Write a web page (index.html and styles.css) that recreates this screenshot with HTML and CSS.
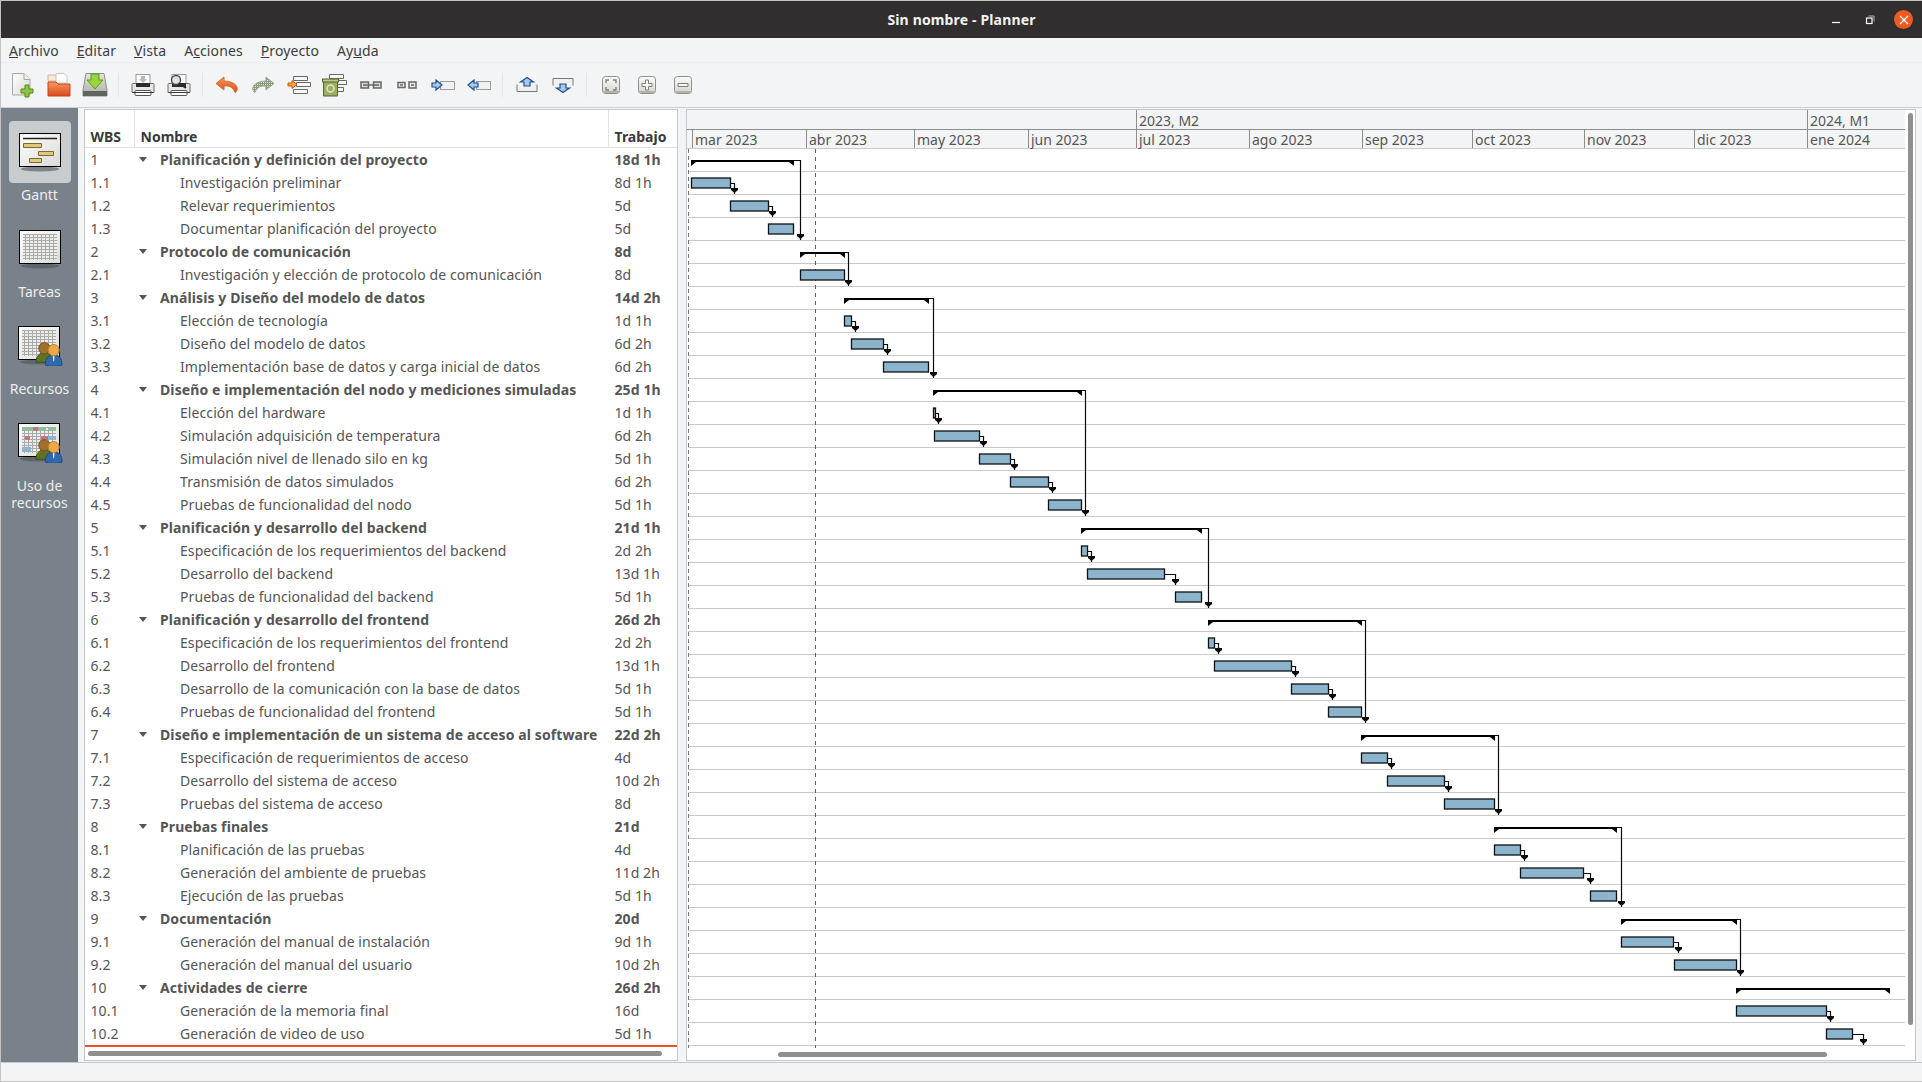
FILE: index.html
```html
<!DOCTYPE html>
<html lang="es">
<head>
  <meta charset="UTF-8">
  <title>Sin nombre - Planner</title>
  <link rel="stylesheet" href="styles.css">
</head>
<body>
<svg class="defs" width="0" height="0">
  <defs>
    <linearGradient id="pageFill" x1="0" y1="0" x2="1" y2="1"><stop offset="0" stop-color="#ffffff"/><stop offset="1" stop-color="#d9d9d6"/></linearGradient>
    <linearGradient id="orangeFill" x1="0" y1="0" x2="0" y2="1"><stop offset="0" stop-color="#f59a5d"/><stop offset="1" stop-color="#d9491c"/></linearGradient>
    <linearGradient id="diskFill" x1="0" y1="0" x2="0" y2="1"><stop offset="0" stop-color="#e4e6e0"/><stop offset="1" stop-color="#a9ada6"/></linearGradient>
    <linearGradient id="keyFill" x1="0" y1="0" x2="0" y2="1"><stop offset="0" stop-color="#fbfbfa"/><stop offset="1" stop-color="#d3d3cf"/></linearGradient>
    <pattern id="cells" width="4" height="3" patternUnits="userSpaceOnUse"><rect width="4" height="3" fill="#ececeb"/><path d="M3.500 0V3M0 2.500H4" stroke="#aaa" stroke-width="1"/></pattern>
    <pattern id="hatch" width="2" height="2" patternUnits="userSpaceOnUse"><rect width="2" height="2" fill="#8a9a78"/><rect width="1" height="1" fill="#e3e8dc"/></pattern>
    <pattern id="rowLine" x="0" y="149" width="1218" height="23" patternUnits="userSpaceOnUse"><rect y="22" width="1218" height="1" fill="#c9c9c9"/></pattern>
    <marker id="arrow" viewBox="-4 -7 8 8" refX="0" refY="0" markerWidth="8" markerHeight="8" markerUnits="userSpaceOnUse" orient="0"><path d="M-3.500 -6H3.500V-4L0 -1L-3.500 -4Z" fill="#0a0a0a"/></marker>

    <symbol id="frame" viewBox="0 0 44 40"><ellipse cx="22" cy="37" rx="19" ry="2.500" fill="#4d5358" opacity=".6"/><rect x="1.500" y="1.500" width="41" height="33" fill="url(#pageFill)" stroke="#000"/></symbol>
    <symbol id="people" viewBox="0 0 30 30">
      <path d="M1 26c0-7 4-10 9-10s9 3 9 10z" fill="#5f7320" stroke="#3f4d14"/>
      <circle cx="10" cy="11" r="6" fill="#a0702c" stroke="#6f4c1c"/>
      <path d="M11 29c0-8 4-11 9-11s9 3 9 11c-5 2-13 2-18 0z" fill="#2f68ad" stroke="#1d4679"/>
      <path d="M19 18h2l-.5 7h-1z" fill="#e8eef5"/>
      <circle cx="20" cy="13" r="6" fill="#eba94a" stroke="#b67a22"/>
    </symbol>
    <symbol id="keyBase" viewBox="0 0 20 20"><rect x="1.500" y="1.500" width="17" height="17" rx="3" fill="url(#keyFill)" stroke="#8f8f8b"/><rect x="2" y="16" width="16" height="2" rx="1" fill="#b3b3ae"/></symbol>
    <symbol id="printer" viewBox="0 0 24 24">
      <rect x="5" y="1.500" width="14" height="11" fill="#fff" stroke="#9a9a9a"/>
      <path d="M2 10.500h20a1 1 0 0 1 1 1v8H1v-8a1 1 0 0 1 1-1z" fill="#e6e7e4" stroke="#6d6d6d"/>
      <rect x="5" y="10" width="14" height="4" fill="#2c2c2c"/>
      <rect x="4" y="17.500" width="16" height="5" rx="1" fill="#fafafa" stroke="#565656"/>
      <rect x="1.500" y="19" width="21" height="1" fill="#3a3a3a"/>
    </symbol>
  </defs>
</svg>

<div class="window">
  <header class="titlebar">
    <span></span>
    <span class="title">Sin nombre - Planner</span>
    <div class="winbtns">
      <svg class="winbtn" width="10" height="10" viewBox="0 0 10 10"><path d="M1 7.500H9" stroke="#fff" stroke-width="1.200"/></svg>
      <svg class="winbtn" width="10" height="10" viewBox="0 0 10 10"><rect x="1.500" y="3" width="5.500" height="5.500" fill="none" stroke="#fff" stroke-width="1.200"/><path d="M3.500 1H9V6.500" fill="none" stroke="#b5b5b5"/></svg>
      <span class="closebtn"><svg width="10" height="10" viewBox="0 0 10 10"><path d="M1 1L9 9M9 1L1 9" stroke="#fff" stroke-width="1.300"/></svg></span>
    </div>
  </header>

  <nav class="menubar">
    <span class="menu"><u>A</u>rchivo</span>
    <span class="menu"><u>E</u>ditar</span>
    <span class="menu"><u>V</u>ista</span>
    <span class="menu">A<u>c</u>ciones</span>
    <span class="menu"><u>P</u>royecto</span>
    <span class="menu">Ay<u>u</u>da</span>
  </nav>

  <div class="toolbar">
    <span class="tool"><svg width="24" height="26" viewBox="0 0 24 26"><path d="M1.500 1.500H13L19 7.500V23H1.500Z" fill="url(#pageFill)" stroke="#a9a9a6"/><path d="M13 1.500V7.500H19" fill="#efefec" stroke="#a9a9a6"/><path d="M14 13h4v4h4v4h-4v4h-4v-4h-4v-4h4z" fill="#8cc63f" stroke="#5a8a1d"/></svg></span>
    <span class="tool"><svg width="26" height="26" viewBox="0 0 26 26"><path d="M2 3H9L11 5V9H2Z" fill="#f7e8d8" stroke="#d3b795"/><path d="M10 1.500H18L21 4.500V11H10Z" fill="#fff" stroke="#c4c4c0"/><path d="M2 10H10L12 12H24V24H2Z" fill="url(#orangeFill)" stroke="#c8441c"/></svg></span>
    <span class="tool"><svg width="26" height="26" viewBox="0 0 26 26"><path d="M4 1.500H22L25 18V24H1V18Z" fill="url(#diskFill)" stroke="#8d918a"/><rect x="1" y="19" width="24" height="5" fill="#60645f"/><path d="M9 2H17V8H21L13 17L5 8H9Z" fill="#9bd43d" stroke="#5f9a1d"/></svg></span>
    <span class="sep"></span>
    <span class="tool"><svg width="24" height="24"><use href="#printer"/><path d="M10 3h4v3h2l-4 4-4-4h2z" fill="#b9b9b9"/></svg></span>
    <span class="tool"><svg width="24" height="24"><use href="#printer"/><circle cx="9" cy="7" r="4.500" fill="#dfe3e6" stroke="#4c4c4c" stroke-width="1.400"/><path d="M12 10.500L19 15" stroke="#2b2b2b" stroke-width="2"/></svg></span>
    <span class="sep"></span>
    <span class="tool"><svg width="24" height="18" viewBox="0 0 24 18"><path d="M9 1L1 7.500L9 14V10C14 9.500 18 11 20 16.500C24 15 24 5.500 9 5Z" fill="url(#orangeFill)" stroke="#dc6b2c"/></svg></span>
    <span class="tool"><svg width="24" height="18" viewBox="0 0 24 18"><path d="M15 1L23 7.500L15 14V10C10 9.500 6 11 4 16.500C0 15 0 5.500 15 5Z" fill="url(#hatch)" stroke="#9aa78a"/></svg></span>
    <span class="tool"><svg width="24" height="20" viewBox="0 0 24 20"><path d="M6.500 1.500H20.500V5.500H6.500ZM9.500 7.500H23.500V11.500H9.500ZM6.500 14.500H20.500V18.500H6.500Z" fill="#f7f7f7" stroke="#6a6a6a"/><path d="M1 8H5V5.500L10 9.500L5 13.500V11H1Z" fill="#f7a934" stroke="#c9541c"/></svg></span>
    <span class="tool"><svg width="26" height="24" viewBox="0 0 26 24"><path d="M7.500 1.500H21.500V5.500H7.500ZM10.500 7.500H24.500V11.500H10.500ZM7.500 14.500H21.500V18.500H7.500Z" fill="#f7f7f7" stroke="#6a6a6a"/><path d="M1.500 8H15.500V23H1.500Z" fill="#9cae62" stroke="#55642a"/><rect x=".5" y="6" width="16" height="3" fill="#bfc98e" stroke="#55642a"/><circle cx="8.500" cy="15.500" r="3.500" fill="none" stroke="#dfe6c4" stroke-width="1.500"/></svg></span>
    <span class="tool"><svg width="22" height="10" viewBox="0 0 22 10"><path d="M1 2H8.500V8H1ZM13.500 2H21V8H13.500ZM3 5H19" fill="#d9d9d9" stroke="#666" stroke-width="1.500"/></svg></span>
    <span class="tool"><svg width="20" height="10" viewBox="0 0 20 10"><path d="M1 2.500H8V7.500H1ZM12 2H19V8H12ZM14 5H17M6 5H3" fill="#e9e9e9" stroke="#666" stroke-width="1.500"/></svg></span>
    <span class="tool"><svg width="24" height="12" viewBox="0 0 24 12"><rect x="9.500" y="2.500" width="14" height="8" fill="#f1f1f0" stroke="#9c9c9c"/><path d="M1 4H5V1L11 6L5 11V8H1Z" fill="#a9c8ea" stroke="#1f4f8f" stroke-width="1.200"/></svg></span>
    <span class="tool"><svg width="24" height="12" viewBox="0 0 24 12"><rect x="9.500" y="2.500" width="14" height="8" fill="#f1f1f0" stroke="#9c9c9c"/><path d="M11 4H7V1L1 6L7 11V8H11Z" fill="#a9c8ea" stroke="#1f4f8f" stroke-width="1.200"/></svg></span>
    <span class="sep"></span>
    <span class="tool"><svg width="22" height="16" viewBox="0 0 22 16"><path d="M1 7.500V14.500H21V7.500" fill="#f1f1f0" stroke="#777"/><path d="M8 9V5H4.500L11 .5L17.500 5H14V9Z" fill="#a9c8ea" stroke="#1f4f8f" stroke-width="1.200"/></svg></span>
    <span class="tool"><svg width="22" height="16" viewBox="0 0 22 16"><path d="M1 8.500V1.500H21V8.500" fill="#f1f1f0" stroke="#777"/><path d="M8 7V11H4.500L11 15.500L17.500 11H14V7Z" fill="#a9c8ea" stroke="#1f4f8f" stroke-width="1.200"/></svg></span>
    <span class="sep"></span>
    <span class="tool"><svg width="20" height="20"><use href="#keyBase"/><path d="M5 8V5H8M12 5H15V8M15 12V15H12M8 15H5V12" fill="none" stroke="#7d7d7a" stroke-width="1.300"/></svg></span>
    <span class="tool"><svg width="20" height="20"><use href="#keyBase"/><path d="M8.500 5H11.500V8.500H15V11.500H11.500V15H8.500V11.500H5V8.500H8.500Z" fill="#f5f5f3" stroke="#7d7d7a"/></svg></span>
    <span class="tool"><svg width="20" height="20"><use href="#keyBase"/><path d="M5 8.500H15V11.500H5Z" fill="#f5f5f3" stroke="#7d7d7a"/></svg></span>
  </div>

  <div class="main">
    <aside class="sidebar">
      <div class="view active">
        <div class="view-icon"><svg width="44" height="40">
          <use href="#frame"/>
          <path d="M5 6.500H39" stroke="#222" stroke-width="1.300"/>
          <path d="M5.500 11.500H23.500V15.500H5.500ZM20.500 19.500H35.500V23.500H20.500ZM11.500 26.500H23.500V30.500H11.500Z" fill="#e0c97c" stroke="#7a6a35"/>
        </svg></div>
        <span class="view-label">Gantt</span>
      </div>
      <div class="view">
        <div class="view-icon"><svg width="44" height="40">
          <use href="#frame"/>
          <rect x="5" y="5" width="34" height="26" fill="url(#cells)"/>
        </svg></div>
        <span class="view-label">Tareas</span>
      </div>
      <div class="view">
        <div class="view-icon"><svg width="46" height="42">
          <use href="#frame" width="44" height="40"/>
          <rect x="5" y="5" width="34" height="26" fill="url(#cells)"/>
          <use href="#people" x="18" y="13" width="28" height="28"/>
        </svg></div>
        <span class="view-label">Recursos</span>
      </div>
      <div class="view">
        <div class="view-icon"><svg width="46" height="42">
          <use href="#frame" width="44" height="40"/>
          <rect x="5" y="5" width="34" height="26" fill="url(#cells)"/>
          <path d="M5 5H16V9H5ZM21 5H29V9H21ZM32 5H39V9H32Z" fill="#8fc09b"/>
          <path d="M16 5H21V9H16ZM8 14H13V18H8ZM24 14H31V18H24Z" fill="#c9727f"/>
          <path d="M5 25H14V29H5ZM31 14H39V18H31Z" fill="#8eb4d3"/>
          <use href="#people" x="18" y="13" width="28" height="28"/>
        </svg></div>
        <span class="view-label">Uso de recursos</span>
      </div>
    </aside>

    <section class="tasks">
      <div class="grid head">
        <span class="cell">WBS</span>
        <span class="cell">Nombre</span>
        <span class="cell">Trabajo</span>
      </div>
      <div class="grid row group"><span>1</span><span class="name"><i class="exp"></i>Planificación y definición del proyecto</span><span>18d 1h</span></div>
      <div class="grid row"><span>1.1</span><span class="name">Investigación preliminar</span><span>8d 1h</span></div>
      <div class="grid row"><span>1.2</span><span class="name">Relevar requerimientos</span><span>5d</span></div>
      <div class="grid row"><span>1.3</span><span class="name">Documentar planificación del proyecto</span><span>5d</span></div>
      <div class="grid row group"><span>2</span><span class="name"><i class="exp"></i>Protocolo de comunicación</span><span>8d</span></div>
      <div class="grid row"><span>2.1</span><span class="name">Investigación y elección de protocolo de comunicación</span><span>8d</span></div>
      <div class="grid row group"><span>3</span><span class="name"><i class="exp"></i>Análisis y Diseño del modelo de datos</span><span>14d 2h</span></div>
      <div class="grid row"><span>3.1</span><span class="name">Elección de tecnología</span><span>1d 1h</span></div>
      <div class="grid row"><span>3.2</span><span class="name">Diseño del modelo de datos</span><span>6d 2h</span></div>
      <div class="grid row"><span>3.3</span><span class="name">Implementación base de datos y carga inicial de datos</span><span>6d 2h</span></div>
      <div class="grid row group"><span>4</span><span class="name"><i class="exp"></i>Diseño e implementación del nodo y mediciones simuladas</span><span>25d 1h</span></div>
      <div class="grid row"><span>4.1</span><span class="name">Elección del hardware</span><span>1d 1h</span></div>
      <div class="grid row"><span>4.2</span><span class="name">Simulación adquisición de temperatura</span><span>6d 2h</span></div>
      <div class="grid row"><span>4.3</span><span class="name">Simulación nivel de llenado silo en kg</span><span>5d 1h</span></div>
      <div class="grid row"><span>4.4</span><span class="name">Transmisión de datos simulados</span><span>6d 2h</span></div>
      <div class="grid row"><span>4.5</span><span class="name">Pruebas de funcionalidad del nodo</span><span>5d 1h</span></div>
      <div class="grid row group"><span>5</span><span class="name"><i class="exp"></i>Planificación y desarrollo del backend</span><span>21d 1h</span></div>
      <div class="grid row"><span>5.1</span><span class="name">Especificación de los requerimientos del backend</span><span>2d 2h</span></div>
      <div class="grid row"><span>5.2</span><span class="name">Desarrollo del backend</span><span>13d 1h</span></div>
      <div class="grid row"><span>5.3</span><span class="name">Pruebas de funcionalidad del backend</span><span>5d 1h</span></div>
      <div class="grid row group"><span>6</span><span class="name"><i class="exp"></i>Planificación y desarrollo del frontend</span><span>26d 2h</span></div>
      <div class="grid row"><span>6.1</span><span class="name">Especificación de los requerimientos del frontend</span><span>2d 2h</span></div>
      <div class="grid row"><span>6.2</span><span class="name">Desarrollo del frontend</span><span>13d 1h</span></div>
      <div class="grid row"><span>6.3</span><span class="name">Desarrollo de la comunicación con la base de datos</span><span>5d 1h</span></div>
      <div class="grid row"><span>6.4</span><span class="name">Pruebas de funcionalidad del frontend</span><span>5d 1h</span></div>
      <div class="grid row group"><span>7</span><span class="name"><i class="exp"></i>Diseño e implementación de un sistema de acceso al software</span><span>22d 2h</span></div>
      <div class="grid row"><span>7.1</span><span class="name">Especificación de requerimientos de acceso</span><span>4d</span></div>
      <div class="grid row"><span>7.2</span><span class="name">Desarrollo del sistema de acceso</span><span>10d 2h</span></div>
      <div class="grid row"><span>7.3</span><span class="name">Pruebas del sistema de acceso</span><span>8d</span></div>
      <div class="grid row group"><span>8</span><span class="name"><i class="exp"></i>Pruebas finales</span><span>21d</span></div>
      <div class="grid row"><span>8.1</span><span class="name">Planificación de las pruebas</span><span>4d</span></div>
      <div class="grid row"><span>8.2</span><span class="name">Generación del ambiente de pruebas</span><span>11d 2h</span></div>
      <div class="grid row"><span>8.3</span><span class="name">Ejecución de las pruebas</span><span>5d 1h</span></div>
      <div class="grid row group"><span>9</span><span class="name"><i class="exp"></i>Documentación</span><span>20d</span></div>
      <div class="grid row"><span>9.1</span><span class="name">Generación del manual de instalación</span><span>9d 1h</span></div>
      <div class="grid row"><span>9.2</span><span class="name">Generación del manual del usuario</span><span>10d 2h</span></div>
      <div class="grid row group"><span>10</span><span class="name"><i class="exp"></i>Actividades de cierre</span><span>26d 2h</span></div>
      <div class="grid row"><span>10.1</span><span class="name">Generación de la memoria final</span><span>16d</span></div>
      <div class="grid row"><span>10.2</span><span class="name">Generación de video de uso</span><span>5d 1h</span></div>
      <div class="overshoot"></div>
      <div class="hscroll tasks-scroll"><div class="thumb"></div></div>
    </section>

    <section class="chart">
      <div class="chart-main">
        <div class="tier tier-top">
          <span class="band" style="width:449px"></span>
          <span class="band" style="width:671px">2023, M2</span>
          <span class="band" style="width:98px">2024, M1</span>
        </div>
        <div class="tier tier-months">
          <span class="band band-start" style="width:5px"></span>
          <span class="band" style="width:114px">mar 2023</span>
          <span class="band" style="width:108px">abr 2023</span>
          <span class="band" style="width:114px">may 2023</span>
          <span class="band" style="width:108px">jun 2023</span>
          <span class="band" style="width:113px">jul 2023</span>
          <span class="band" style="width:113px">ago 2023</span>
          <span class="band" style="width:110px">sep 2023</span>
          <span class="band" style="width:112px">oct 2023</span>
          <span class="band" style="width:110px">nov 2023</span>
          <span class="band" style="width:113px">dic 2023</span>
          <span class="band" style="width:98px">ene 2024</span>
        </div>
        <!-- viewBox uses window coordinates, each row is 23px from y=148 -->
        <svg class="gantt" width="1218" height="899" viewBox="687 149 1218 899">
          <rect x="688" y="149" width="1217" height="897" fill="url(#rowLine)"/>
          <path class="guide" d="M688.500 149V1048"/>
          <path class="today" d="M815.500 149V1048"/>

          <!-- summaries -->
          <path class="sum" d="M691 160H794V166L789 162H696L691 166Z"/>
          <path class="sum" d="M800 252H845V258L840 254H805L800 258Z"/>
          <path class="sum" d="M844 298H929V304L924 300H849L844 304Z"/>
          <path class="sum" d="M933 390H1082V396L1077 392H938L933 396Z"/>
          <path class="sum" d="M1081 528H1202V534L1197 530H1086L1081 534Z"/>
          <path class="sum" d="M1208 620H1362V626L1357 622H1213L1208 626Z"/>
          <path class="sum" d="M1361 735H1495V741L1490 737H1366L1361 741Z"/>
          <path class="sum" d="M1494 827H1617V833L1612 829H1499L1494 833Z"/>
          <path class="sum" d="M1621 919H1737V925L1732 921H1626L1621 925Z"/>
          <path class="sum" d="M1736 988H1890V994L1885 990H1741L1736 994Z"/>

          <!-- links -->
          <path class="link" d="M794 160.500H800.500V240"/>
          <path class="link" d="M845 252.500H848.500V286"/>
          <path class="link" d="M929 298.500H933.500V378"/>
          <path class="link" d="M1082 390.500H1085.500V516"/>
          <path class="link" d="M1202 528.500H1208.500V608"/>
          <path class="link" d="M1362 620.500H1365.500V723"/>
          <path class="link" d="M1495 735.500H1498.500V815"/>
          <path class="link" d="M1617 827.500H1621.500V907"/>
          <path class="link" d="M1737 919.500H1740.500V976"/>
          <path class="link" d="M731 183.500H734.500V194"/>
          <path class="link" d="M769 206.500H772.500V217"/>
          <path class="link" d="M852 321.500H855.500V332"/>
          <path class="link" d="M884 344.500H887.500V355"/>
          <path class="link" d="M934 413.500H938.500V424"/>
          <path class="link" d="M980 436.500H983.500V447"/>
          <path class="link" d="M1011 459.500H1014.500V470"/>
          <path class="link" d="M1049 482.500H1052.500V493"/>
          <path class="link" d="M1088 551.500H1091.500V562"/>
          <path class="link" d="M1165 574.500H1175.500V585"/>
          <path class="link" d="M1215 643.500H1218.500V654"/>
          <path class="link" d="M1292 666.500H1295.500V677"/>
          <path class="link" d="M1329 689.500H1332.500V700"/>
          <path class="link" d="M1388 758.500H1391.500V769"/>
          <path class="link" d="M1445 781.500H1448.500V792"/>
          <path class="link" d="M1521 850.500H1524.500V861"/>
          <path class="link" d="M1584 873.500H1590.500V884"/>
          <path class="link" d="M1674 942.500H1678.500V953"/>
          <path class="link" d="M1827 1011.500H1830.500V1022"/>
          <path class="link" d="M1853 1034.500H1863.500V1045"/>

          <!-- tasks -->
          <rect class="bar" x="691.500" y="178" width="39" height="10"/>
          <rect class="bar" x="730.500" y="201" width="38" height="10"/>
          <rect class="bar" x="768.500" y="224" width="25" height="10"/>
          <rect class="bar" x="800.500" y="270" width="44" height="10"/>
          <rect class="bar" x="844.500" y="316" width="7" height="10"/>
          <rect class="bar" x="851.500" y="339" width="32" height="10"/>
          <rect class="bar" x="883.500" y="362" width="45" height="10"/>
          <rect class="bar" x="933.500" y="408" width="2" height="10"/>
          <rect class="bar" x="934.500" y="431" width="45" height="10"/>
          <rect class="bar" x="979.500" y="454" width="31" height="10"/>
          <rect class="bar" x="1010.500" y="477" width="38" height="10"/>
          <rect class="bar" x="1048.500" y="500" width="33" height="10"/>
          <rect class="bar" x="1081.500" y="546" width="6" height="10"/>
          <rect class="bar" x="1087.500" y="569" width="77" height="10"/>
          <rect class="bar" x="1175.500" y="592" width="26" height="10"/>
          <rect class="bar" x="1208.500" y="638" width="6" height="10"/>
          <rect class="bar" x="1214.500" y="661" width="77" height="10"/>
          <rect class="bar" x="1291.500" y="684" width="37" height="10"/>
          <rect class="bar" x="1328.500" y="707" width="33" height="10"/>
          <rect class="bar" x="1361.500" y="753" width="26" height="10"/>
          <rect class="bar" x="1387.500" y="776" width="57" height="10"/>
          <rect class="bar" x="1444.500" y="799" width="50" height="10"/>
          <rect class="bar" x="1494.500" y="845" width="26" height="10"/>
          <rect class="bar" x="1520.500" y="868" width="63" height="10"/>
          <rect class="bar" x="1590.500" y="891" width="26" height="10"/>
          <rect class="bar" x="1621.500" y="937" width="52" height="10"/>
          <rect class="bar" x="1674.500" y="960" width="62" height="10"/>
          <rect class="bar" x="1736.500" y="1006" width="90" height="10"/>
          <rect class="bar" x="1826.500" y="1029" width="26" height="10"/>
        </svg>
        <div class="hscroll chart-scroll"><div class="thumb"></div></div>
      </div>
      <div class="vscroll"><div class="thumb"></div></div>
    </section>
  </div>

  <footer class="statusbar"></footer>
</div>
</body>
</html>
```

FILE: styles.css
```css
* { box-sizing: border-box; }

html, body {
  margin: 0;
  height: 100%;
  overflow: hidden;
}

body {
  font-family: "Noto Sans", "Open Sans", sans-serif;
  font-size: 14px;
  color: #555;
  background: #c4c4c4;
}

.defs { position: absolute; }

.window {
  display: flex;
  flex-direction: column;
  height: 100%;
  border: 1px solid #c4c4c4;
  border-right: 0;
  background: #f3f4f6;
}

.titlebar {
  display: grid;
  grid-template-columns: 1fr auto 1fr;
  align-items: center;
  flex: none;
  height: 37px;
  background: #302e2e;
}
.title {
  color: #f2f2f2;
  font-weight: 700;
  letter-spacing: .15px;
}
.winbtns {
  display: flex;
  justify-content: flex-end;
  align-items: center;
  gap: 24px;
  padding-right: 9px;
}
.closebtn {
  display: flex;
  align-items: center;
  justify-content: center;
  width: 19px;
  height: 19px;
  margin-left: -5px;
  border-radius: 50%;
  background: #ee5a24;
}

.menubar {
  display: flex;
  flex: none;
  height: 25px;
  align-items: center;
  gap: 18px;
  padding-left: 8px;
  border-bottom: 1px solid #ececee;
  color: #3d3d3d;
  letter-spacing: .1px;
}

.toolbar {
  display: flex;
  flex: none;
  height: 45px;
  align-items: center;
  padding-left: 4px;
  border-bottom: 1px solid #cfd1d3;
}
.tool {
  display: flex;
  width: 36px;
  justify-content: center;
  align-items: center;
}
.sep {
  width: 2px;
  height: 24px;
  margin: 0 5px;
  border-left: 1px solid #e4e5e7;
}

.main {
  display: flex;
  flex: 1;
  min-height: 0;
}

.sidebar {
  flex: none;
  width: 77px;
  padding: 13px 8px 0;
  background: #79828a;
}
.view {
  display: flex;
  flex-direction: column;
  align-items: center;
  height: 97px;
}
.view-icon {
  display: flex;
  justify-content: center;
  align-items: center;
  flex: none;
  width: 62px;
  height: 62px;
  border-radius: 4px;
}
.active .view-icon { background: #c9cccf; }
.view-label {
  margin-top: 3px;
  color: #eceeef;
  text-align: center;
  line-height: 17px;
}

.tasks {
  flex: none;
  width: 594px;
  height: 952px;
  margin: 1px 0 0 6px;
  border: 1px solid #c6c9cc;
  background: #fff;
}
.grid {
  display: grid;
  grid-template-columns: 50px 474px 1fr;
  height: 23px;
  align-items: center;
}
.grid > span { padding-left: 5.5px; white-space: nowrap; }
.head {
  height: 38px;
  align-items: stretch;
  border-bottom: 1px solid #e0e0e0;
  color: #3a3a3a;
  font-weight: 700;
}
.head .cell {
  padding-top: 17px;
  border-right: 1px solid #e4e4e4;
}
.head .cell:last-child { border-right: 0; }
.row { letter-spacing: .08px; }
.row .name { padding-left: 45px; }
.group { font-weight: 700; letter-spacing: .1px; }
.group > span:first-child { font-weight: 400; }
.group .name { display: flex; align-items: center; padding-left: 4px; }
.exp {
  flex: none;
  width: 0;
  height: 0;
  margin-right: 13px;
  border-style: solid;
  border-width: 5px 4px 0;
  border-color: #555 transparent transparent;
}
.overshoot {
  height: 2px;
  background: #e95420;
}

.hscroll {
  display: flex;
  align-items: center;
  height: 12px;
}
.hscroll .thumb {
  height: 5px;
  border-radius: 3px;
  background: #8f8f8f;
}
.tasks-scroll { padding-left: 3px; }
.tasks-scroll .thumb { width: 574px; }
.chart-scroll { padding-left: 91px; }
.chart-scroll .thumb { width: 1049px; }

.chart {
  display: flex;
  flex: none;
  width: 1230px;
  height: 952px;
  margin: 1px 0 0 8px;
  border: 1px solid #c6c9cc;
  background: #fff;
}
.chart-main { flex: none; width: 1218px; }
.tier {
  display: flex;
  background: #f3f4f6;
}
.tier-top { height: 20px; border-bottom: 1px solid #8c8c8c; line-height: 22px; }
.tier-months { height: 19px; border-bottom: 1px solid #c9c9c9; line-height: 19px; }
.band {
  flex: none;
  padding-left: 2px;
  border-left: 1px solid #8c8c8c;
  white-space: nowrap;
}
.tier-top .band:first-child, .band-start { border-left: 0; }
.gantt { display: block; }
.guide { stroke: #777; stroke-dasharray: 4 3; fill: none; }
.today { stroke: #3f5fbf; stroke-dasharray: 4 4; fill: none; }
.sum { fill: #000; }
.link { fill: none; stroke: #0a0a0a; stroke-width: 1.2; marker-end: url(#arrow); }
.bar { fill: #8cb4cd; stroke: #0c1216; stroke-width: 1.3; }

.vscroll {
  flex: 1;
  padding: 3px 2px 0 3px;
}
.vscroll .thumb {
  width: 5px;
  height: 912px;
  border-radius: 3px;
  background: #8f8f8f;
}

.statusbar {
  flex: none;
  height: 19px;
  border-top: 1px solid #c6c9cc;
}
```
